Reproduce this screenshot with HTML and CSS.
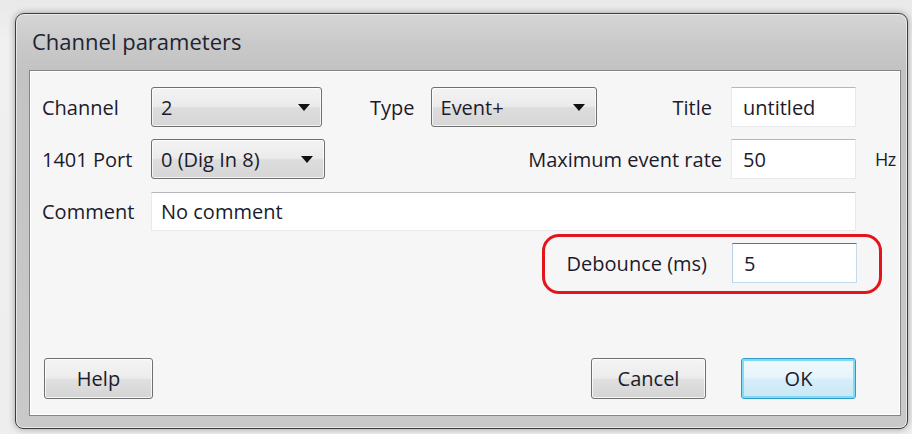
FILE: index.html
```html
<!DOCTYPE html>
<html lang="en">
<head>
<meta charset="utf-8">
<title>Channel parameters</title>
<link rel="stylesheet" href="styles.css">
</head>
<body>
  <div class="window">
    <div class="titlebar">Channel parameters</div>
    <div class="client">
      <div class="form">
        <span class="label">Channel</span>
        <div class="combo combo-channel"><span>2</span><i class="arrow"></i></div>
        <div class="mid">
          <span class="label type-label">Type</span>
          <div class="combo combo-type"><span>Event+</span><i class="arrow"></i></div>
          <span class="label title-label">Title</span>
        </div>
        <div class="field">untitled</div>
        <span></span>

        <span class="label">1401 Port</span>
        <div class="combo combo-port"><span>0 (Dig In 8)</span><i class="arrow"></i></div>
        <div class="mid">
          <span class="label rate-label">Maximum event rate</span>
        </div>
        <div class="field">50</div>
        <span class="label unit">Hz</span>

        <span class="label">Comment</span>
        <div class="field field-wide">No comment</div>
      </div>

      <div class="debounce-row">
        <div class="highlight">
          <span class="label">Debounce (ms)</span>
          <div class="field field-focus">5</div>
        </div>
      </div>

      <div class="buttons">
        <button class="btn btn-help">Help</button>
        <div class="spacer"></div>
        <button class="btn">Cancel</button>
        <button class="btn btn-default">OK</button>
      </div>
    </div>
  </div>
</body>
</html>
```

FILE: styles.css
```css
html, body {
  margin: 0;
  padding: 0;
}

body {
  width: 912px;
  height: 434px;
  overflow: hidden;
  background: linear-gradient(#e9e9e9, #f0f0f0 40px, #eeeeee);
  padding: 13px 0 0 15px;
  box-sizing: border-box;
  font-family: "Open Sans", "Noto Sans", sans-serif;
  color: #1b1b2c;
}

.window {
  width: 893px;
  height: 416px;
  box-sizing: border-box;
  border: 1px solid #3d3d3d;
  border-radius: 9px 9px 8px 8px;
  background: linear-gradient(180deg, #d6d6d6 0px, #c9c9c9 30px, #c3c3c3 56px, #c9c9c9 100%);
  box-shadow: 0 0 7px rgba(0, 0, 0, 0.35), inset 0 0 0 1px rgba(255, 255, 255, 0.55);
  padding: 0 6px 12px 13px;
  display: flex;
  flex-direction: column;
}

.titlebar {
  height: 56px;
  flex: none;
  font-size: 22px;
  line-height: 54px;
  padding-left: 3px;
  color: #1d2433;
}

.client {
  flex: 1;
  border: 1px solid #858585;
  box-shadow: inset 0 0 0 1px #ffffff;
  background: #f6f6f6;
  padding: 16px 0 16px 12px;
  display: flex;
  flex-direction: column;
}

.label {
  font-size: 20px;
  white-space: nowrap;
  color: #1b1b2c;
}

.form {
  display: grid;
  grid-template-columns: 109px 174px 1fr 125px 44px;
  grid-auto-rows: 40px;
  row-gap: 12px;
  align-items: center;
}

.mid {
  display: flex;
  align-items: center;
  height: 40px;
}

.type-label {
  margin-left: 45px;
  margin-right: 16px;
}

.title-label {
  margin-left: auto;
  margin-right: 19px;
}

.rate-label {
  margin-left: auto;
  margin-right: 9px;
}

.unit {
  padding-left: 19px;
  font-size: 18px;
  letter-spacing: -0.5px;
}

/* drop-down lists */
.combo {
  height: 40px;
  box-sizing: border-box;
  border: 1px solid #707070;
  border-radius: 3px;
  background: linear-gradient(180deg, #f3f3f3 0%, #ebebeb 48%, #dddddd 52%, #d6d6d6 100%);
  box-shadow: inset 0 0 0 1px rgba(255, 255, 255, 0.7);
  display: flex;
  align-items: center;
  padding-left: 9px;
  font-size: 20px;
  position: relative;
}

.combo-channel { width: 171px; }
.combo-type { width: 166px; }
.combo-port { width: 174px; }

.arrow {
  position: absolute;
  right: 11px;
  top: 16px;
  width: 0;
  height: 0;
  border-left: 6px solid transparent;
  border-right: 6px solid transparent;
  border-top: 7px solid #111111;
}

/* edit boxes */
.field {
  height: 40px;
  box-sizing: border-box;
  background: #ffffff;
  border: 1px solid #e8e9ee;
  border-top-color: #b5b7bd;
  display: flex;
  align-items: center;
  padding-left: 11px;
  font-size: 20px;
}

.field-wide {
  grid-column: 2 / 5;
  height: 39px;
  padding-left: 9px;
}

.debounce-row {
  display: flex;
  justify-content: flex-end;
  padding-right: 18px;
  margin-top: 3px;
}

.highlight {
  display: flex;
  align-items: center;
  gap: 25px;
  border: 3px solid #e3141b;
  border-radius: 17px;
  padding: 6px 22px 8px 22px;
}

.field-focus {
  width: 125px;
  border-color: #c5daed;
  border-top-color: #3d7bad;
  border-left-color: #b5cfe7;
}

/* dialog buttons */
.buttons {
  margin-top: auto;
  display: flex;
  align-items: center;
  gap: 35px;
  padding-right: 44px;
  padding-left: 2px;
}

.spacer {
  flex: 1;
}

.btn {
  width: 115px;
  height: 41px;
  box-sizing: border-box;
  border: 1px solid #707070;
  border-radius: 3px;
  background: linear-gradient(180deg, #f4f4f4 0%, #ececec 48%, #e0e0e0 52%, #d4d4d4 100%);
  box-shadow: inset 0 0 0 1px rgba(255, 255, 255, 0.75);
  font-family: "Open Sans", "Noto Sans", sans-serif;
  font-size: 20px;
  color: #1b1b2c;
  padding: 0;
}

.btn-help {
  width: 109px;
}

.btn-default {
  border-color: #3399cc;
  background: linear-gradient(180deg, #f2fafd 0%, #e5f4fb 48%, #d6eef9 52%, #c8e7f6 100%);
  box-shadow: inset 0 0 0 2px #7fdcf3;
}
```
